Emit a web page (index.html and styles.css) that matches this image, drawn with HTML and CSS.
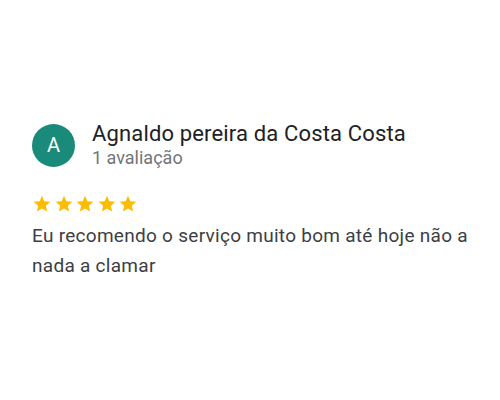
FILE: index.html
```html
<!DOCTYPE html>
<html lang="pt">
<head>
    <meta charset="UTF-8" />
    <title>Avaliação</title>
    <link rel="stylesheet" href="styles.css">
</head>
<body>
<div class="review">
    <div class="author">
        <div class="avatar">A</div>
        <div class="who">
            <div class="name">Agnaldo pereira da Costa Costa</div>
            <div class="count">1 avaliação</div>
        </div>
    </div>

    <div class="stars">
        <svg viewBox="0 0 24 24"><path d="M12 17.27L18.18 21l-1.64-7.03L22 9.24l-7.19-.61L12 2 9.19 8.63 2 9.24l5.46 4.73L5.82 21z"/></svg>
        <svg viewBox="0 0 24 24"><path d="M12 17.27L18.18 21l-1.64-7.03L22 9.24l-7.19-.61L12 2 9.19 8.63 2 9.24l5.46 4.73L5.82 21z"/></svg>
        <svg viewBox="0 0 24 24"><path d="M12 17.27L18.18 21l-1.64-7.03L22 9.24l-7.19-.61L12 2 9.19 8.63 2 9.24l5.46 4.73L5.82 21z"/></svg>
        <svg viewBox="0 0 24 24"><path d="M12 17.27L18.18 21l-1.64-7.03L22 9.24l-7.19-.61L12 2 9.19 8.63 2 9.24l5.46 4.73L5.82 21z"/></svg>
        <svg viewBox="0 0 24 24"><path d="M12 17.27L18.18 21l-1.64-7.03L22 9.24l-7.19-.61L12 2 9.19 8.63 2 9.24l5.46 4.73L5.82 21z"/></svg>
    </div>

    <p class="text">Eu recomendo o serviço muito bom até hoje não a nada a clamar</p>
</div>
</body>
</html>
```

FILE: styles.css
```css
body {
  font-family: Roboto, 'Liberation Sans', sans-serif;
  background: #ffffff;
  margin: 0;
  color: #202124;
}
.review {
  padding: 121px 20px 0 32px;
}
.author {
  display: flex;
  align-items: center;
  gap: 17px;
}
.avatar {
  width: 43px;
  height: 43px;
  border-radius: 50%;
  background: #1a8a7a;
  color: #fff;
  font-size: 20px;
  display: flex;
  align-items: center;
  justify-content: center;
}
.name {
  font-size: 22px;
  line-height: 26px;
  letter-spacing: 0.15px;
}
.count {
  font-size: 18px;
  line-height: 22px;
  color: #70757a;
}
.stars {
  display: flex;
  gap: 1.5px;
  margin-top: 25px;
}
.stars svg {
  width: 20px;
  height: 20px;
  fill: #fbbc04;
}
.text {
  margin: 7px 0 0;
  font-size: 19px;
  line-height: 30px;
  letter-spacing: 0.28px;
  color: #3c4043;
}
```
